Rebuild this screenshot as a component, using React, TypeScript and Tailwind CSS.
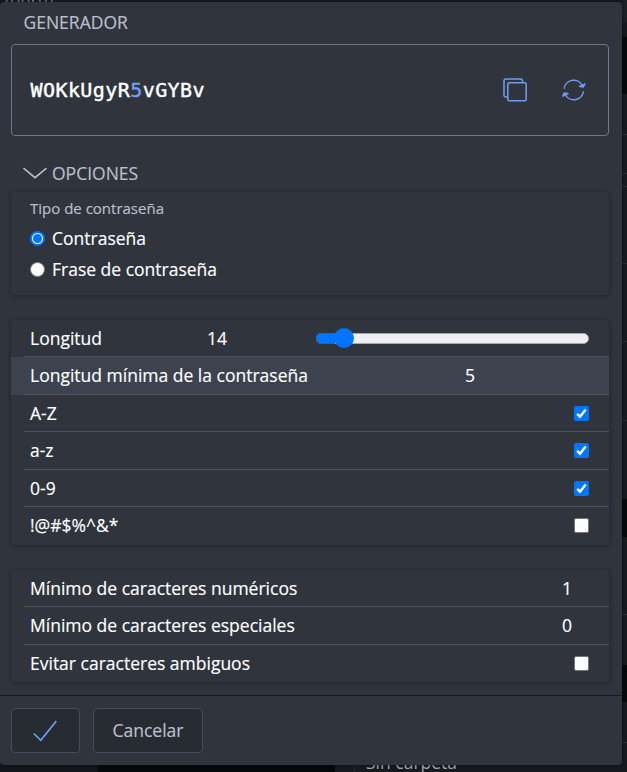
import React from 'react';

function Check({ checked }: { checked?: boolean }) {
  return checked ? (
    <svg className="block h-[15px] w-[15px] shrink-0" viewBox="0 0 15 15">
      <rect width="15" height="15" rx="2" fill="#0075ff" />
      <path d="M3.2 7.9 6 10.7 11.7 3.5" fill="none" stroke="#fff" strokeWidth="2.4" />
    </svg>
  ) : (
    <span className="block h-[15px] w-[15px] shrink-0 rounded-[2px] border border-[#767676] bg-white" />
  );
}

function Row({ label, h, line = true, children }: { label: string; h: string; line?: boolean; children: React.ReactNode }) {
  return (
    <div className={`${h} pl-[13px]`}>
      <div className={`flex h-full items-center justify-between pr-5 pl-1.5 ${line ? 'border-b border-[#4c525f]' : ''}`}>
        <span>{label}</span>
        {children}
      </div>
    </div>
  );
}

const card = 'mx-[11px] mr-[13px] overflow-hidden rounded-[4px] bg-[#2f343d] shadow-[0_1px_5px_rgba(0,0,0,0.32)]';

function Backdrop() {
  return (
    <div className="flex h-[772px] w-[627px] flex-col bg-[#16191e]">
      <div className="flex h-[765px] justify-between overflow-hidden">
        <span className="-mt-[9px] ml-1 h-5 text-[17.5px] leading-5 text-[#777b82]">fuerte</span>
        <div className="flex w-[5px] flex-col">
          <div className="h-[22px] bg-[#1b1f26]" />
          <div className="h-[15px] bg-[#15181c]" />
          <div className="h-[57px] bg-[#07080a]" />
          <div className="h-[41px] border-b border-[#292c31]" />
          <div className="h-[39px] border-b border-[#292c31]" />
          <div className="h-[13px] border-b border-[#292c31]" />
          <div className="h-[77px] border-b border-[#292c31]" />
          <div className="h-[78px] border-b border-[#292c31]" />
          <div className="h-[79px] border-b border-[#292c31]" />
          <div className="h-[78px]" />
          <div className="h-[38px] bg-[#07080a]" />
          <div className="h-[78px] border-b border-[#292c31]" />
          <div className="h-[50px]" />
          <div className="h-[37px] bg-[#07080a]" />
          <div className="h-[41px] border-b border-[#292c31]" />
        </div>
      </div>
      <div className="flex h-[7px] overflow-hidden">
        <div className="w-[98px] bg-[#121519]" />
        <div className="w-[237px] bg-[#07080b]" />
        <div className="w-[20px] border-r border-[#24272c]" />
        <div className="ml-[11px] -mt-[15px] h-6 text-[17.5px] leading-6 text-[#a3a5a9]">Sin carpeta</div>
      </div>
    </div>
  );
}

export default function App() {
  return (
    <div className="relative h-[772px] w-[627px] overflow-hidden font-['Open_Sans',sans-serif] text-[17.5px] leading-[25px] text-white">
      <Backdrop />
      <main className="absolute top-[2px] left-0 flex h-[763px] w-[622px] flex-col rounded-[4px] bg-[#2f343d] shadow-[0_0_3px_rgba(0,0,0,0.5)] [-webkit-text-stroke:0.15px]">
        <h1 className="h-[42px] pt-[8px] pl-[23.5px] text-[17.5px] text-[#bac0ce]">GENERADOR</h1>
        <section className="mr-[13px] ml-[11px] flex h-[92px] items-center rounded-[4px] border border-[#71778a] pr-[22px] pl-[18.5px]">
          <span className="flex-1 font-['DejaVu_Sans_Mono',monospace] text-[20px] tracking-[0.42px] [-webkit-text-stroke:0.45px]">
            WOKkUgyR<span className="text-[#6f9df1]">5</span>vGYBv
          </span>
          <svg className="mr-[35px] h-6 w-6" viewBox="0 0 24 24" fill="none" stroke="#6f9df1" strokeWidth="1.5">
            <path d="M4.8 19H2.7Q1 19 1 17.3V2.7Q1 1 2.7 1h15.1q1.7 0 1.7 1.7v2.1" />
            <rect x="4.8" y="4.8" width="18.4" height="18" rx="1.5" />
          </svg>
          <svg className="h-6 w-6" viewBox="0 0 24 24" fill="none" stroke="#6f9df1" strokeWidth="1.5">
            <path d="M2.1 10.6A9.8 9.8 0 0 1 20.8 8.2M21.5 13.4A9.8 9.8 0 0 1 2.8 15.8" />
            <path d="m17 8.3 4.3.7 1.8-3.7M6.6 15.7l-4.3-.7L.5 18.7" />
            <path d="m18 7.8 3.1 1 1.2-2.8ZM5.6 16.2l-3.1-1-1.2 2.8Z" fill="#6f9df1" strokeWidth=".5" />
          </svg>
        </section>
        <h2 className="mt-[25px] flex h-[31px] items-start pl-[23px] text-[17.5px] text-[#bac0ce]">
          <svg className="mt-[6px] mr-[5px] h-3 w-[24px]" viewBox="0 0 24 12" fill="none" stroke="currentColor" strokeWidth="1.5">
            <path d="m.5 1.2 11.5 9.5L23.5 1.2" />
          </svg>
          OPCIONES
        </h2>
        <section className={`${card} h-[103px] pl-[19px]`}>
          <div className="mt-[4px] h-[27px] text-[15px] leading-6 text-[#bac0ce]">Tipo de contraseña</div>
          <div className="flex h-[31px] items-center gap-[7px]">
            <span className="flex h-[15px] w-[15px] items-center justify-center rounded-full border-2 border-[#0075ff] bg-white">
              <span className="h-[9px] w-[9px] rounded-full bg-[#0075ff]" />
            </span>
            Contraseña
          </div>
          <div className="flex h-[31px] items-center gap-[7px]">
            <span className="h-[15px] w-[15px] rounded-full border border-[#767676] bg-white" />
            Frase de contraseña
          </div>
        </section>
        <section className={`${card} mt-[25px] h-[225px]`}>
          <div className="h-[37px] pl-[13px]">
            <div className="flex h-full items-center border-b border-[#4c525f] pr-5 pl-1.5">
              <span className="w-[177px]">Longitud</span>
              <span className="w-[109px]">14</span>
              <div className="flex h-5 flex-1 items-center rounded-full">
                <div className="flex h-[11px] w-full items-center rounded-full border border-[#a7a7a7] bg-[#efefef]">
                  <div className="-ml-px h-[11px] w-[19px] rounded-l-full border border-r-0 border-[#1767c9] bg-[#0075ff]" />
                  <div className="-ml-px h-5 w-5 shrink-0 rounded-full bg-[#0075ff]" />
                </div>
              </div>
            </div>
          </div>
          <div className="h-[38px] bg-[#3c424e] pl-[13px]">
            <div className="flex h-full items-center border-b border-[#4c525f] pl-1.5">
              <span className="w-[435px]">Longitud mínima de la contraseña</span>
              <span>5</span>
            </div>
          </div>
          <Row label="A-Z" h="h-[37px]"><Check checked /></Row>
          <Row label="a-z" h="h-[38px]"><Check checked /></Row>
          <Row label="0-9" h="h-[37px]"><Check checked /></Row>
          <Row label="!@#$%^&*" h="h-[37px]" line={false}><Check /></Row>
        </section>
        <section className={`${card} mt-[25px] h-[112px]`}>
          <Row label="Mínimo de caracteres numéricos" h="h-[37px]"><span className="mr-[17px]">1</span></Row>
          <Row label="Mínimo de caracteres especiales" h="h-[38px]"><span className="mr-[17px]">0</span></Row>
          <Row label="Evitar caracteres ambiguos" h="h-[37px]" line={false}><Check /></Row>
        </section>
        <footer className="mt-[13px] flex h-[70px] gap-[13px] border-t border-[#171a1f] pt-3 pl-[11px]">
          <button className="flex h-[45px] w-[69px] items-center justify-center rounded-[4px] border border-[#464c59] bg-[#272c33]">
            <svg className="mr-px h-6 w-6" viewBox="0 0 24 24" fill="none" stroke="#6f9df1" strokeWidth="1.7">
              <path d="m.7 14.5 7.1 6.8L23.3 2" />
            </svg>
          </button>
          <button className="h-[45px] w-[110px] rounded-[4px] border border-[#464c59] bg-[#272c33] text-[#bac0ce]">Cancelar</button>
        </footer>
      </main>
    </div>
  );
}
